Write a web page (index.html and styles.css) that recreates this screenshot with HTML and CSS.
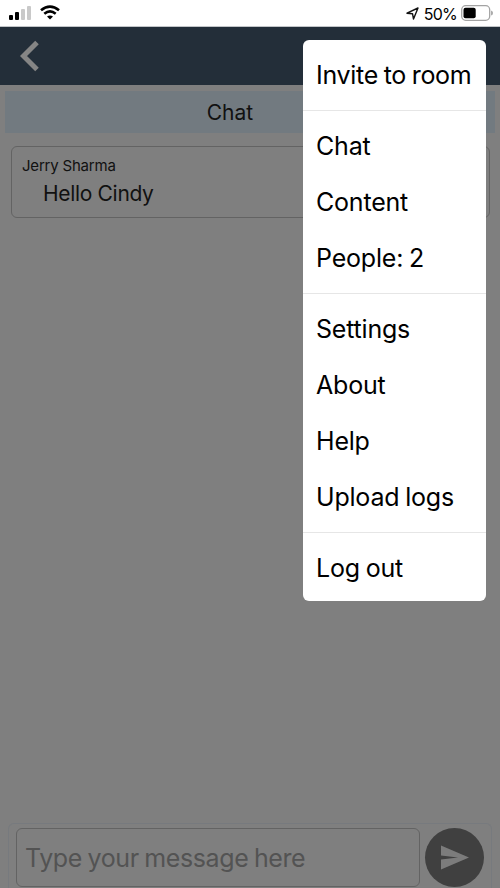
FILE: index.html
```html
<!DOCTYPE html>
<html lang="en">
<head>
<meta charset="utf-8">
<meta name="viewport" content="width=device-width">
<title>Chat</title>
<link rel="stylesheet" href="styles.css">
</head>
<body>
<div class="app">
  <div class="status">
    <svg class="signal" width="22" height="15" viewBox="0 0 22 15"><rect x="0" y="10" width="4" height="5" rx="1"/><rect x="6" y="7" width="4" height="8" rx="1"/><g fill="#c9c9c9"><rect x="12" y="4" width="4" height="11" rx="1"/><rect x="18" y="1" width="4" height="14" rx="1"/></g></svg>
    <svg class="wifi" width="20" height="15" viewBox="0 0 20 15"><g fill="none" stroke="#000" stroke-width="2.7"><path d="M1 5.2Q10-2.1 19 5.2"/><path d="M4.3 8.7Q10 4.2 15.7 8.7"/></g><path d="M7 11.6Q10 9.2 13 11.6L10 14.6Z"/></svg>
    <svg class="location" width="13" height="13" viewBox="0 0 13 13"><path d="M1 6.2 12 1 7.5 12 6.5 6.7Z" fill="none" stroke="#111" stroke-width="1.4" stroke-linejoin="round"/></svg>
    <span class="percent">50%</span>
    <svg class="battery" width="32" height="16" viewBox="0 0 32 16"><rect x=".7" y=".7" width="28" height="14.6" rx="4" fill="none" stroke="#a3a3a3" stroke-width="1.3"/><rect x="2.5" y="2.7" width="12.2" height="10.6" rx="2"/><path d="M30.2 5.4Q31.9 6 31.9 8T30.2 10.6Z" fill="#999"/></svg>
  </div>
  <header class="header">
    <svg width="20" height="32" viewBox="0 0 20 32"><path d="M17 2.5 3.5 16 17 29.5" fill="none" stroke="#858585" stroke-width="5"/></svg>
  </header>
  <main class="content">
    <h1 class="title">Chat</h1>
    <article class="message">
      <div class="sender">Jerry Sharma</div>
      <div class="body">Hello Cindy</div>
    </article>
  </main>
  <footer class="composer">
    <div class="input">Type your message here</div>
    <div class="send"><svg width="59" height="59" viewBox="0 0 59 59"><path d="M16 17.5 44 29.5 16 41.5V31.5L33 29.5 16 27.5Z" fill="#7c7c7c"/></svg></div>
  </footer>
  <nav class="menu">
    <div class="group"><div class="item invite">Invite to room</div></div>
    <div class="group"><div class="item">Chat</div><div class="item">Content</div><div class="item">People: 2</div></div>
    <div class="group"><div class="item">Settings</div><div class="item">About</div><div class="item">Help</div><div class="item">Upload logs</div></div>
    <div class="group"><div class="item">Log out</div></div>
  </nav>
</div>
</body>
</html>
```
FILE: styles.css
```css
* { box-sizing: border-box; }
body { margin: 0; font-family: Inter, sans-serif; color: #000; }
.app { position: relative; display: flex; flex-direction: column; height: 888px; overflow: hidden; background: #7f7f7f; }
svg { display: block; flex: none; }
.status { display: flex; height: 27px; flex: none; background: #fff; padding: 5px 7px 0 9px; border-bottom: 1px solid #c2c5c8; }
.wifi { margin-left: 9px; }
.location { margin: 2px 0 0 auto; }
.percent { margin: -1px 4px 0 5px; font-size: 16px; line-height: 20px; letter-spacing: -.8px; }
.header { height: 58px; flex: none; background: #232e39; padding: 13px 0 0 20px; }
.content { flex: 1; padding: 6px 5px; }
.title { height: 42px; margin: 0 0 13px; background: #727a80; text-align: center; font-size: 21px; font-weight: 400; line-height: 43px; padding-right: 40px; color: #111; }
.message { height: 72px; margin: 0 5px 0 6px; border: 1.5px solid #636363; border-radius: 6px; padding: 9px 10px; color: #111; }
.sender { font-size: 15px; line-height: 20px; letter-spacing: -.2px; word-spacing: 0; }
.body { margin-left: 21px; font-size: 21px; line-height: 35px; letter-spacing: -.32px; }
.composer { display: flex; gap: 5px; height: 65px; flex: none; margin: 0 8px; padding: 4px 7px 0; border: 1px solid #777a7e; border-bottom: 0; border-radius: 6px 6px 0 0; }
.input { width: 404px; height: 59px; border: 1.5px solid #636363; border-radius: 6px; padding-left: 8px; font-size: 25px; line-height: 58px; letter-spacing: -.4px; word-spacing: -1px; color: #535353; white-space: nowrap; }
.send { width: 59px; height: 59px; border-radius: 50%; background: #404040; }
.menu { position: absolute; left: 303px; top: 40px; width: 183px; height: 561px; padding-top: 1px; background: #fff; border-radius: 6px; font-size: 25px; letter-spacing: -.2px; word-spacing: -1px; }
.group { padding: 7px 0 7px 13px; }
.group:first-child { padding-top: 6px; }
.group + .group { border-top: 1px solid #e6e6e6; }
.item { height: 56px; line-height: 56px; white-space: nowrap; }
.invite { letter-spacing: -.3px; }
```
